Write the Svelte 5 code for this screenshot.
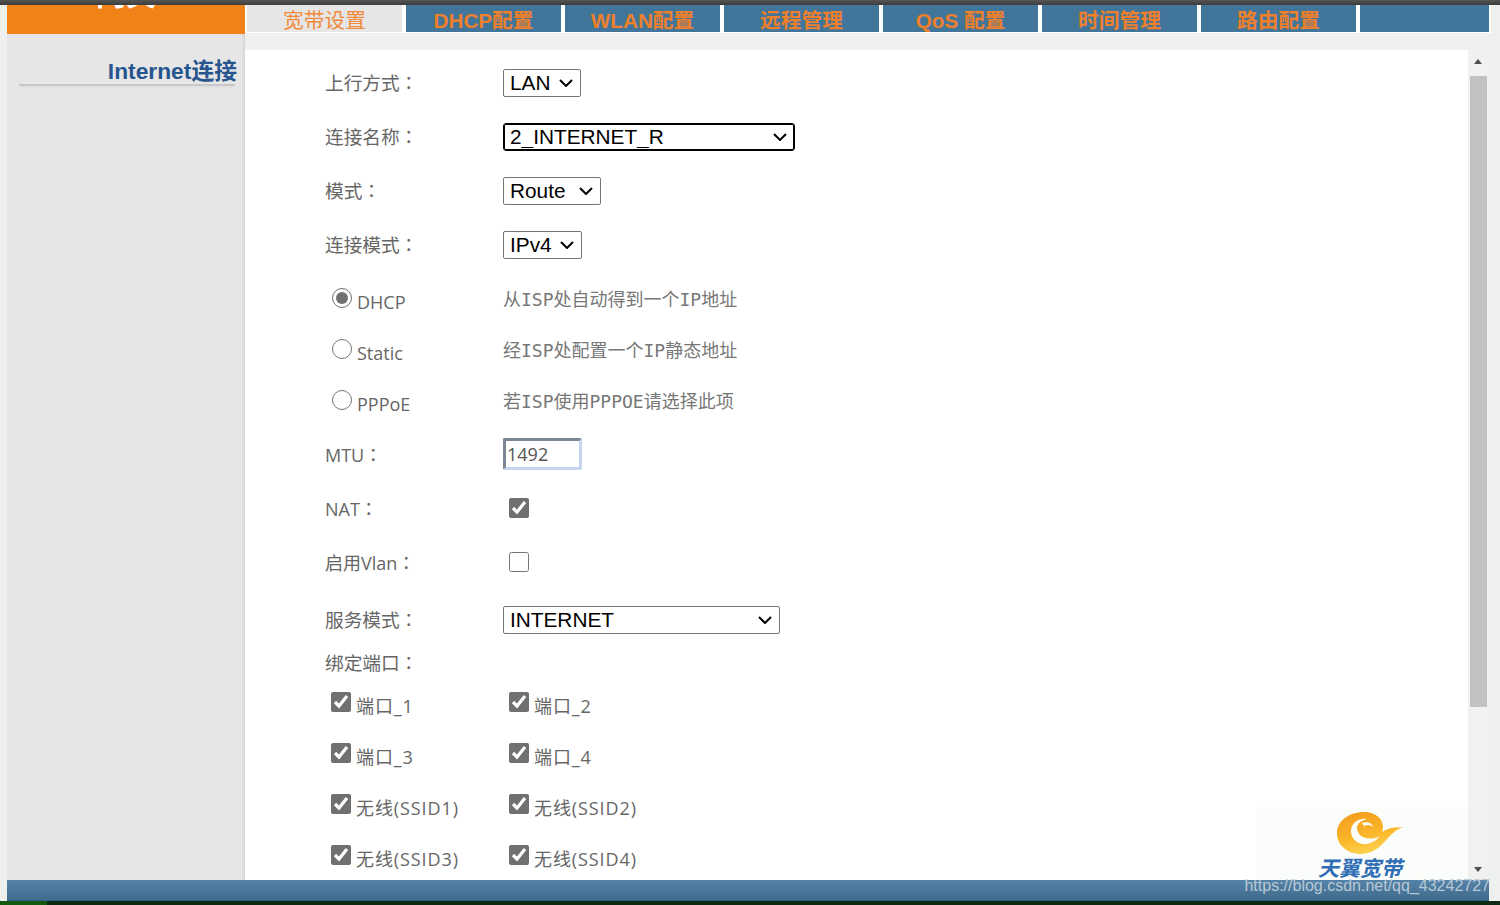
<script>
  const tabs = ["DHCP配置", "WLAN配置", "远程管理", "QoS 配置", "时间管理", "路由配置", ""];

  const modes = [
    { id: "DHCP", text: "从ISP处自动得到一个IP地址", checked: true },
    { id: "Static", text: "经ISP处配置一个IP静态地址", checked: false },
    { id: "PPPoE", text: "若ISP使用PPPOE请选择此项", checked: false },
  ];

  const ports = [
    ["端口_1", "端口_2"],
    ["端口_3", "端口_4"],
    ["无线(SSID1)", "无线(SSID2)"],
    ["无线(SSID3)", "无线(SSID4)"],
  ];
</script>

<div class="page">
  <div class="topline"></div>

  <header class="head">
    <div class="brand"><span>网关</span></div>
    <nav class="tabs">
      <div class="tab active">宽带设置</div>
      {#each tabs as t}
        <div class="tab">{t}</div>
      {/each}
    </nav>
  </header>

  <div class="body">
    <aside class="side">
      <div class="side-item"><span>Internet连接</span></div>
    </aside>

    <main class="main">
      <form class="form">
        <div class="row up">
          <span class="label">上行方式<i>：</i></span>
          <select class="sel sel-lan"><option>LAN</option></select>
        </div>
        <div class="row up">
          <span class="label">连接名称<i>：</i></span>
          <select class="sel sel-name"><option>2_INTERNET_R</option></select>
        </div>
        <div class="row up">
          <span class="label">模式<i>：</i></span>
          <select class="sel sel-route"><option>Route</option></select>
        </div>
        <div class="row up">
          <span class="label">连接模式<i>：</i></span>
          <select class="sel sel-ip"><option>IPv4</option></select>
        </div>

        {#each modes as m}
          <div class="row row-mode">
            <label class="label opt radio">
              <input type="radio" name="mode" checked={m.checked} />
              <span>{m.id}</span>
            </label>
            <span class="desc">{m.text}</span>
          </div>
        {/each}

        <div class="row row-mtu">
          <span class="label">MTU<i>：</i></span>
          <input class="mtu" type="text" value="1492" />
        </div>
        <div class="row">
          <span class="label">NAT<i>：</i></span>
          <input class="check" type="checkbox" checked />
        </div>
        <div class="row">
          <span class="label">启用Vlan<i>：</i></span>
          <input class="check" type="checkbox" />
        </div>
        <div class="row row-service up">
          <span class="label">服务模式<i>：</i></span>
          <select class="sel sel-service"><option>INTERNET</option></select>
        </div>
        <div class="row row-bind">
          <span class="label">绑定端口<i>：</i></span>
        </div>

        {#each ports as pair}
          <div class="row row-mode">
            {#each pair as p}
              <label class="label opt port">
                <input type="checkbox" checked />
                <span>{p}</span>
              </label>
            {/each}
          </div>
        {/each}
      </form>
    </main>

    <div class="scrollbar">
      <span class="arrow up-arrow"></span>
      <div class="thumb"></div>
      <span class="arrow down-arrow"></span>
    </div>

    <div class="logo">
      <svg width="66" height="42" viewBox="0 0 66 42">
        <defs>
          <linearGradient id="swoosh" x1="0.2" y1="0" x2="0.6" y2="1">
            <stop offset="0" stop-color="#f49c1e" />
            <stop offset="0.6" stop-color="#fbb92c" />
            <stop offset="1" stop-color="#fdd657" />
          </linearGradient>
        </defs>
        <path
          fill="url(#swoosh)"
          d="M27 0C39 0 46 7 46 15C46 17 45.5 19 45 20C48 18 53 15 66 15C60 17 57 20 52 25C45 33 37 42 24 42C10 42 0 33 0 21C0 9 12 0 27 0Z"
        />
        <path
          fill="#fbfdfb"
          d="M30 7C22 6 14 11 14 19C14 28 22 33 30 32C35 31 39 29 43 24C38 27 33 27 29 26C24 25 20 21 20 16C20 11 25 8 30 7Z"
        />
        <path fill="#fbfdfb" d="M25 11C30 9 35 11 36 15C34 13 30 12 27 14Z" />
      </svg>
      <span class="logo-text">天翼宽带</span>
    </div>
  </div>

  <footer class="foot"></footer>
  <div class="watermark">https://blog.csdn.net/qq_43242727</div>
  <div class="strip"><div class="strip-start"></div></div>
</div>

<style>
  :global(body) {
    margin: 0;
    background: #eef0ee;
    overflow: hidden;
  }

  .page {
    position: relative;
    height: 905px;
    display: flex;
    flex-direction: column;
    overflow: hidden;
    font-family: "Open Sans", "Noto Sans CJK SC", sans-serif;
    color: #666;
  }

  .topline {
    height: 5px;
    flex: none;
    background: linear-gradient(#555 0, #3c3c3c 100%);
  }

  .head {
    display: flex;
    height: 29px;
    flex: none;
    margin-left: 7px;
  }

  .brand {
    width: 238px;
    flex: none;
    background: #f08218;
    color: #fff;
    font: bold 30px/30px "Liberation Sans", "Noto Sans CJK SC", sans-serif;
    text-align: center;
    overflow: hidden;
  }

  .brand span {
    display: block;
    margin-top: -25px;
  }

  /* white shows through as the gaps between tabs */
  .tabs {
    display: flex;
    height: 28px;
    box-sizing: border-box;
    padding: 0 2px;
    gap: 4px;
    background: #fff;
  }

  .tab {
    width: 155px;
    height: 27px;
    flex: none;
    background: #41769a;
    color: #ef7f2a;
    font: bold 20.7px/31px "Liberation Sans", "Noto Sans CJK SC", sans-serif;
    text-align: center;
    overflow: hidden;
  }

  .tab:last-child {
    width: 129px;
  }

  .tab.active {
    background: #e6e6e6;
    color: #f28a3c;
    font-weight: normal;
  }

  .body {
    position: relative;
    flex: none;
    height: 846px;
    margin: 0 11px 0 7px;
    display: flex;
  }

  .side {
    width: 238px;
    flex: none;
    box-sizing: border-box;
    background: #e6e6e6;
    box-shadow: inset -3px 0 3px -2px #ccc;
    padding: 21px 10px 0 12px;
  }

  .side-item {
    height: 29px;
    border-bottom: 2px solid #c8c8c8;
    box-shadow: 0 2px 2px -1px #ddd;
    color: #26558f;
    font: bold 22.8px/33px "Liberation Sans", "Noto Sans CJK SC", sans-serif;
    text-align: right;
    white-space: nowrap;
  }

  .side-item span {
    margin-right: -2px;
  }

  .main {
    width: 1223px;
    flex: none;
    margin-top: 16px;
    background: #fff;
    overflow: hidden;
  }

  .form {
    padding: 6px 0 0 80px;
  }

  .row {
    display: flex;
    align-items: center;
    height: 54px;
    font-size: 18px;
  }

  .row-mode {
    height: 51px;
  }

  .row-mtu {
    margin-top: 2px;
  }

  .row-service {
    height: 58px;
    margin-top: 2px;
  }

  .row-bind {
    height: 26px;
    margin-bottom: 1px;
  }

  .up .label {
    margin-top: -4px;
  }

  .row-bind .label {
    margin-top: -2px;
  }

  .up .label,
  .row-bind .label {
    font-size: 18.7px;
  }

  .label {
    width: 178px;
    flex: none;
    white-space: nowrap;
  }

  /* centred full-width colon, as the TC glyph draws it */
  .label i {
    font-style: normal;
    font-size: 18px;
    font-family: "Noto Sans CJK TC", sans-serif;
  }

  .opt {
    display: flex;
    align-items: center;
    padding-left: 7px;
    box-sizing: border-box;
    gap: 5px;
  }

  .opt span {
    position: relative;
    top: 4px;
  }

  .opt input {
    width: 20px;
    height: 20px;
    margin: 0;
    accent-color: #707070;
  }

  .port {
    padding-left: 6px;
  }

  .port span {
    top: 3px;
    letter-spacing: 0.9px;
  }

  .desc {
    font: 18px "DejaVu Sans Mono", "Noto Sans CJK SC", monospace;
    color: #777;
  }

  .sel {
    appearance: none;
    height: 28px;
    box-sizing: border-box;
    color: #000;
    border: 1px solid #767676;
    border-radius: 2px;
    font: 20.8px "Liberation Sans", sans-serif;
    padding: 0 0 2px 6px;
    background: #fff
      url("data:image/svg+xml,%3Csvg xmlns='http://www.w3.org/2000/svg' width='14' height='8'%3E%3Cpath d='M1 1l6 6 6-6' fill='none' stroke='%23000' stroke-width='2'/%3E%3C/svg%3E")
      no-repeat right 7px center;
  }

  .sel-lan {
    width: 78px;
  }

  .sel-route {
    width: 98px;
  }

  .sel-ip {
    width: 79px;
  }

  /* 1px border plus inset ring: a real 2px border would clip the underscores */
  .sel-name {
    width: 292px;
    border-color: #000;
    border-radius: 3px;
    box-shadow: inset 0 0 0 1px #000;
  }

  .sel-service {
    width: 277px;
  }

  .mtu {
    width: 79px;
    height: 32px;
    box-sizing: border-box;
    border: 3px solid #c6d6ef;
    border-top-color: #7b8794;
    border-left-color: #7b8794;
    border-radius: 2px;
    padding: 0 1px;
    font: 18px "Open Sans", sans-serif;
    color: #555;
    outline: none;
  }

  .check {
    width: 20px;
    height: 20px;
    margin: 0 0 0 6px;
    accent-color: #707070;
  }

  .scrollbar {
    width: 21px;
    flex: none;
    margin-top: 16px;
    background: #f1f1f1;
    position: relative;
  }

  .thumb {
    position: absolute;
    left: 2px;
    top: 26px;
    width: 17px;
    height: 631px;
    background: #c1c1c1;
  }

  .arrow {
    position: absolute;
    left: 6px;
    width: 0;
    height: 0;
    border-left: 4.5px solid transparent;
    border-right: 4.5px solid transparent;
  }

  .up-arrow {
    top: 9px;
    border-bottom: 5px solid #505050;
  }

  .down-arrow {
    bottom: 8px;
    border-top: 5px solid #505050;
  }

  .logo {
    position: absolute;
    right: 21px;
    bottom: 0;
    width: 212px;
    height: 73px;
    background: #fbfdfb;
    overflow: hidden;
  }

  .logo svg {
    position: absolute;
    left: 81px;
    top: 5px;
  }

  .logo-text {
    position: absolute;
    left: 62px;
    top: 49px;
    font: italic bold 21px/22px "Noto Sans CJK SC", sans-serif;
    color: #2f6db5;
    white-space: nowrap;
  }

  .foot {
    height: 21px;
    flex: none;
    margin: 0 11px 0 7px;
    box-sizing: border-box;
    background: linear-gradient(#5583a8, #3f6b8c);
    border-bottom: 1px solid #335f8f;
  }

  .watermark {
    position: absolute;
    right: 10px;
    top: 876px;
    font: 16px/20px "Liberation Sans", sans-serif;
    color: #b9c9d6;
    white-space: nowrap;
  }

  .strip {
    flex: none;
    height: 4px;
    background: #0f2a14;
  }

  .strip-start {
    width: 47px;
    height: 100%;
    background: #13590f;
  }
</style>
